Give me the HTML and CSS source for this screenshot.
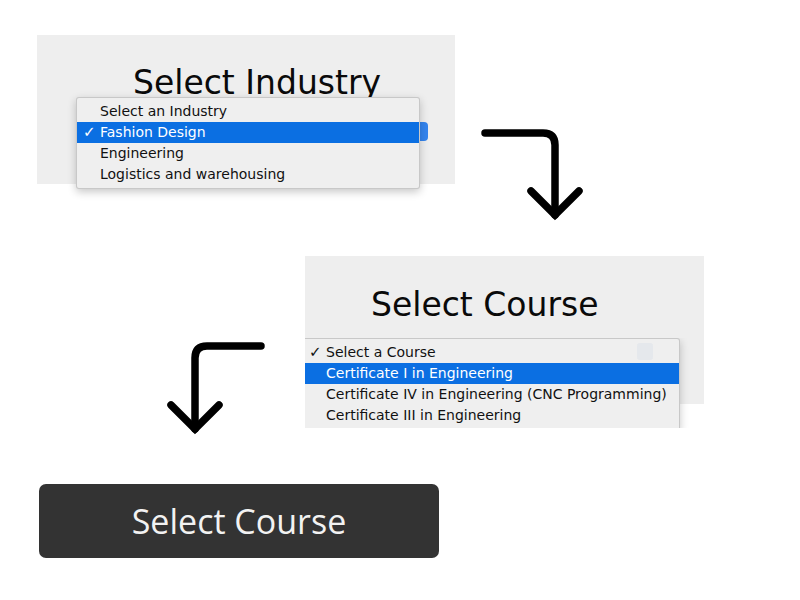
FILE: index.html
```html
<!DOCTYPE html>
<html>
<head>
<meta charset="utf-8">
<link rel="stylesheet" href="styles.css">
</head>
<body>
<div class="canvas">
  <section class="shot shot-industry">
    <h2 class="shot-title">Select Industry</h2>
    <div class="select-btn"></div>
    <ul class="menu menu-industry">
      <li class="menu-item"><span class="check"></span>Select an Industry</li>
      <li class="menu-item is-active"><span class="check">✓</span>Fashion Design</li>
      <li class="menu-item"><span class="check"></span>Engineering</li>
      <li class="menu-item"><span class="check"></span>Logistics and warehousing</li>
    </ul>
  </section>

  <svg class="arrow arrow-right" width="800" height="600" viewBox="0 0 800 600">
    <path d="M485 133 H543 Q555 133 555 145 V215" />
    <path d="M531 191 L555 215 L579 191" />
  </svg>

  <section class="shot shot-course">
    <h2 class="shot-title">Select Course</h2>
  </section>
  <div class="menu-clip">
    <div class="ghost-btn"></div>
    <ul class="menu menu-course">
      <li class="menu-item"><span class="check">✓</span>Select a Course</li>
      <li class="menu-item is-active"><span class="check"></span>Certificate I in Engineering</li>
      <li class="menu-item"><span class="check"></span>Certificate IV in Engineering (CNC Programming)</li>
      <li class="menu-item"><span class="check"></span>Certificate III in Engineering</li>
    </ul>
  </div>

  <svg class="arrow arrow-left" width="800" height="600" viewBox="0 0 800 600">
    <path d="M261 346 H207 Q195 346 195 358 V429" />
    <path d="M171 405 L195 429 L219 405" />
  </svg>

  <button class="cta">Select Course</button>
</div>
</body>
</html>
```

FILE: styles.css
```css
html, body {
  margin: 0;
  padding: 0;
  background: #ffffff;
}

.canvas {
  position: relative;
  width: 800px;
  height: 600px;
  overflow: hidden;
  font-family: "DejaVu Sans", sans-serif;
}

.shot {
  position: absolute;
  background: #eeeeee;
  box-sizing: border-box;
}

.shot-industry {
  left: 37px;
  top: 35px;
  width: 418px;
  height: 149px;
  padding: 29px 0 0 96px;
}

.shot-course {
  left: 305px;
  top: 256px;
  width: 399px;
  height: 148px;
  padding: 30px 0 0 66px;
}

.shot-title {
  margin: 0;
  font-family: "DejaVu Sans", sans-serif;
  font-weight: normal;
  font-size: 33px;
  line-height: 38px;
  color: #0a0a0a;
  white-space: nowrap;
}

.select-btn {
  position: absolute;
  left: 340px;
  top: 87px;
  width: 51px;
  height: 19px;
  border-radius: 4px;
  background: #3384ee;
}

.menu {
  list-style: none;
  margin: 0;
  padding: 3px 0;
  background: #efefef;
  border: 1px solid rgba(0, 0, 0, 0.16);
  box-shadow: 0 3px 8px rgba(0, 0, 0, 0.22);
  border-radius: 3px;
}

.menu-industry {
  position: absolute;
  left: 39px;
  top: 62px;
  width: 344px;
  box-sizing: border-box;
}

.menu-item {
  display: flex;
  align-items: baseline;
  height: 21px;
  line-height: 21px;
  font-size: 14px;
  color: #111111;
  white-space: nowrap;
  padding-left: 6px;
}

.menu-item .check {
  display: inline-block;
  width: 17px;
  flex: none;
  font-size: 15px;
}

.menu-item.is-active {
  background: #0b6fe2;
  color: #ffffff;
}

.menu-clip {
  position: absolute;
  left: 305px;
  top: 338px;
  width: 390px;
  height: 90px;
  overflow: hidden;
}

.menu-course {
  position: relative;
  width: 378px;
  margin-left: -3px;
  box-sizing: border-box;
  border-radius: 3px 3px 0 0;
}

.ghost-btn {
  position: absolute;
  left: 332px;
  top: 5px;
  width: 16px;
  height: 17px;
  border-radius: 3px;
  background: rgba(120, 150, 200, 0.08);
  z-index: 2;
}

.arrow {
  position: absolute;
  left: 0;
  top: 0;
  pointer-events: none;
}

.arrow path {
  fill: none;
  stroke: #000000;
  stroke-width: 7.5;
  stroke-linecap: round;
  stroke-linejoin: miter;
}

.cta {
  position: absolute;
  left: 39px;
  top: 484px;
  width: 400px;
  height: 74px;
  margin: 0;
  padding: 0;
  border: none;
  border-radius: 7px;
  background: #333333;
  color: #f2f2f2;
  font-family: "Open Sans", sans-serif;
  font-size: 34px;
  display: flex;
  align-items: center;
  justify-content: center;
}
```
